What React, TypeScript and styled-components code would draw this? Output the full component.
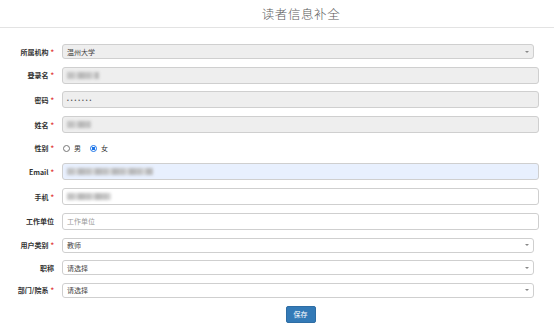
import styled, {createGlobalStyle} from 'styled-components'

const Global = createGlobalStyle`
    html, body {
        margin: 0;
        padding: 0;
        background: #ffffff;
        font-family: "Noto Sans", "Noto Sans CJK SC", sans-serif;
        color: #333333;
    }
`

const Page = styled.div`
    width: 554px;
    height: 330px;
    overflow: hidden;
`

const Header = styled.div`
    height: 28px;
    border-bottom: 1px solid #e3e3e3;
    display: flex;
    align-items: center;
    justify-content: center;
    padding-left: 48px;
    box-sizing: border-box;
`

const Title = styled.h1`
    margin: 0;
    font-size: 12.5px;
    font-weight: 300;
    letter-spacing: 0.6px;
    color: #5a5a5a;
    font-family: "Noto Sans CJK SC", sans-serif;
`

const Form = styled.div`
    display: flex;
    flex-direction: column;
    gap: 7.7px;
    padding-top: 16px;
    padding-right: 15px;
`

const Row = styled.div<{ $h: number }>`
    display: grid;
    grid-template-columns: 54px 1fr;
    column-gap: 8px;
    align-items: center;
    height: ${p => p.$h}px;
`

const Label = styled.label`
    text-align: right;
    font-size: 7px;
    font-weight: 700;
    color: #333333;
    font-family: "Noto Sans CJK SC", sans-serif;
    white-space: nowrap;
`

const Star = styled.span`
    color: #e23b3b;
    margin-left: 2px;
`

const Field = styled.div<{ $bg?: string; $narrow?: boolean }>`
    position: relative;
    height: 100%;
    box-sizing: border-box;
    border: 1px solid #cfcfcf;
    border-radius: 3px;
    background: ${p => p.$bg || '#ffffff'};
    width: ${p => (p.$narrow ? 'calc(100% - 5px)' : '100%')};
    display: flex;
    align-items: center;
    padding-left: 4px;
    font-size: 7px;
    color: #444444;
    font-family: "Noto Sans CJK SC", sans-serif;
`

const Placeholder = styled.span`
    color: #9a9a9a;
`

const Arrow = styled.span`
    position: absolute;
    right: 4px;
    top: 50%;
    margin-top: -1px;
    width: 0;
    height: 0;
    border-left: 2px solid transparent;
    border-right: 2px solid transparent;
    border-top: 2px solid #888888;
`

const Blur = styled.span<{ $w: number }>`
    display: inline-block;
    width: ${p => p.$w}px;
    height: 7px;
    background: repeating-linear-gradient(90deg, #bdbdbd 0 7px, #d2d2d2 7px 11px, #b3b3b3 11px 17px);
    filter: blur(1.4px);
    opacity: 0.9;
`

const Dots = styled.span`
    font-family: "Liberation Sans", sans-serif;
    font-size: 5px;
    letter-spacing: 2px;
    color: #555555;
`

const Radios = styled.div`
    display: flex;
    align-items: center;
    gap: 9px;
    padding-left: 1px;
    font-size: 7px;
    font-family: "Noto Sans CJK SC", sans-serif;
`

const RadioItem = styled.span`
    display: flex;
    align-items: center;
    gap: 4px;
`

const Circle = styled.span<{ $on?: boolean }>`
    width: 7px;
    height: 7px;
    box-sizing: border-box;
    border-radius: 50%;
    border: 1px solid ${p => (p.$on ? '#1a73e8' : '#767676')};
    background: ${p => (p.$on ? 'radial-gradient(circle, #1a73e8 0 1.8px, #ffffff 1.9px)' : '#ffffff')};
`

const Actions = styled.div`
    display: grid;
    grid-template-columns: 54px 1fr;
    column-gap: 8px;
`

const SaveBtn = styled.button`
    grid-column: 2;
    justify-self: center;
    width: 30px;
    height: 17px;
    padding: 0;
    border: 1px solid #2e6da4;
    border-radius: 2px;
    background: #337ab7;
    color: #ffffff;
    font-size: 7px;
    font-family: "Noto Sans CJK SC", sans-serif;
`

export default function App() {
    return (
        <Page>
            <Global />
            <Header>
                <Title>读者信息补全</Title>
            </Header>
            <Form>
                <Row $h={15}>
                    <Label>所属机构<Star>*</Star></Label>
                    <Field $bg="#eeeeee" $narrow>温州大学<Arrow /></Field>
                </Row>
                <Row $h={17}>
                    <Label>登录名<Star>*</Star></Label>
                    <Field $bg="#eeeeee"><Blur $w={32} /></Field>
                </Row>
                <Row $h={17}>
                    <Label>密码<Star>*</Star></Label>
                    <Field $bg="#eeeeee"><Dots>•••••••</Dots></Field>
                </Row>
                <Row $h={17}>
                    <Label>姓名<Star>*</Star></Label>
                    <Field $bg="#eeeeee"><Blur $w={24} /></Field>
                </Row>
                <Row $h={15}>
                    <Label>性别<Star>*</Star></Label>
                    <Radios>
                        <RadioItem><Circle />男</RadioItem>
                        <RadioItem><Circle $on />女</RadioItem>
                    </Radios>
                </Row>
                <Row $h={17}>
                    <Label>Email<Star>*</Star></Label>
                    <Field $bg="#e8f0fe"><Blur $w={86} /></Field>
                </Row>
                <Row $h={17}>
                    <Label>手机<Star>*</Star></Label>
                    <Field><Blur $w={44} /></Field>
                </Row>
                <Row $h={17}>
                    <Label>工作单位</Label>
                    <Field><Placeholder>工作单位</Placeholder></Field>
                </Row>
                <Row $h={15}>
                    <Label>用户类别<Star>*</Star></Label>
                    <Field $narrow>教师<Arrow /></Field>
                </Row>
                <Row $h={15}>
                    <Label>职称</Label>
                    <Field $narrow>请选择<Arrow /></Field>
                </Row>
                <Row $h={15}>
                    <Label>部门/院系<Star>*</Star></Label>
                    <Field $narrow>请选择<Arrow /></Field>
                </Row>
                <Actions>
                    <SaveBtn>保存</SaveBtn>
                </Actions>
            </Form>
        </Page>
    )
}
